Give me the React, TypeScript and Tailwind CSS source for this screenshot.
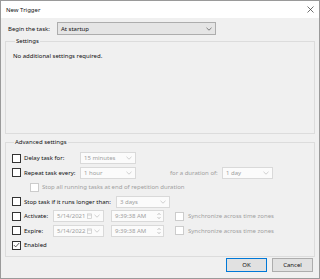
import React from 'react';

const font = { fontFamily: '"Noto Sans", "Open Sans", sans-serif' };

const Chevron = ({ disabled }: { disabled?: boolean }) => (
  <svg width="6" height="4" viewBox="0 0 6 4" className="shrink-0">
    <path d="M0.5 0.8 L3 3.2 L5.5 0.8" fill="none" stroke={disabled ? '#c4c4c4' : '#606060'} strokeWidth="0.8" />
  </svg>
);

const Check = ({ checked, disabled }: { checked?: boolean; disabled?: boolean }) => (
  <span
    className={`flex h-[9px] w-[9px] shrink-0 items-center justify-center border bg-white ${
      disabled ? 'border-[#cccccc]' : 'border-[#333333]'
    }`}
  >
    {checked && (
      <svg width="7" height="6" viewBox="0 0 7 6">
        <path d="M0.8 3 L2.7 4.9 L6.2 1" fill="none" stroke="#333" strokeWidth="0.8" />
      </svg>
    )}
  </span>
);

const Select = ({ value, width }: { value: string; width: string }) => (
  <div
    className={`flex h-[12px] ${width} shrink-0 items-center justify-between border border-[#d9d9d9] bg-[#fbfbfb] pl-[3px] pr-[3px] text-[#a0a0a0]`}
  >
    <span>{value}</span>
    <Chevron disabled />
  </div>
);

const DateBox = ({ value }: { value: string }) => (
  <div className="flex h-[12px] w-[51px] shrink-0 items-center justify-between border border-[#d9d9d9] bg-[#fbfbfb] pl-[3px] pr-[3px] text-[#a0a0a0]">
    <span>{value}</span>
    <span className="flex items-center gap-[2px]">
      <svg width="5" height="6" viewBox="0 0 5 6">
        <rect x="0.4" y="0.9" width="4.2" height="4.7" fill="none" stroke="#c8c8c8" strokeWidth="0.7" />
        <line x1="0.4" y1="2.1" x2="4.6" y2="2.1" stroke="#c8c8c8" strokeWidth="0.7" />
      </svg>
      <Chevron disabled />
    </span>
  </div>
);

const TimeBox = ({ value }: { value: string }) => (
  <div className="flex h-[12px] w-[53px] shrink-0 items-center justify-between border border-[#d9d9d9] bg-[#fbfbfb] pl-[3px] pr-[2px] text-[#a0a0a0]">
    <span>{value}</span>
    <svg width="4" height="8" viewBox="0 0 4 8">
      <path d="M0.5 3 L2 1.3 L3.5 3" fill="none" stroke="#b0b0b0" strokeWidth="0.7" />
      <path d="M0.5 5 L2 6.7 L3.5 5" fill="none" stroke="#b0b0b0" strokeWidth="0.7" />
    </svg>
  </div>
);

export default function App() {
  return (
    <div
      className="flex h-[279px] w-[320px] flex-col overflow-hidden whitespace-nowrap border border-[#9a9a9a] bg-[#f0f0f0] text-[6px] leading-none text-[#111111]"
      style={font}
    >
      <div className="flex h-[17px] shrink-0 items-center justify-between bg-white pl-[5px] pr-[5px]">
        <span>New Trigger</span>
        <svg width="7" height="7" viewBox="0 0 7 7">
          <path d="M0.5 0.5 L6.5 6.5 M6.5 0.5 L0.5 6.5" stroke="#333" strokeWidth="0.7" />
        </svg>
      </div>

      <div className="flex flex-1 flex-col px-[4px]">
        <div className="mt-[4px] flex items-center">
          <span className="ml-[3px] w-[49px]">Begin the task:</span>
          <div className="flex h-[13px] w-[159px] items-center justify-between border border-[#adadad] bg-[#e5e5e5] pl-[3px] pr-[3px]">
            <span>At startup</span>
            <Chevron />
          </div>
        </div>

        <fieldset className="mt-[3px] h-[96px] border border-[#dcdcdc] px-[7px]">
          <legend className="ml-[2px] px-[1px]">Settings</legend>
          <div className="mt-[9px]">No additional settings required.</div>
        </fieldset>

        <fieldset className="mt-[5px] h-[118px] border border-[#dcdcdc] px-[6px] pt-[7px]">
          <legend className="ml-[2px] px-[1px]">Advanced settings</legend>
          <div className="flex flex-col gap-[2.5px]">
            <div className="flex h-[12px] items-center">
              <Check />
              <span className="ml-[3px] w-[56px]">Delay task for:</span>
              <Select value="15 minutes" width="w-[56px]" />
            </div>
            <div className="flex h-[12px] items-center">
              <Check />
              <span className="ml-[3px] w-[56px]">Repeat task every:</span>
              <Select value="1 hour" width="w-[56px]" />
              <span className="ml-[34px] w-[52px] text-[#a0a0a0]">for a duration of:</span>
              <Select value="1 day" width="w-[51px]" />
            </div>
            <div className="flex h-[12px] items-center pl-[18px] text-[#a0a0a0]">
              <Check disabled />
              <span className="ml-[3px]">Stop all running tasks at end of repetition duration</span>
            </div>
            <div className="flex h-[12px] items-center">
              <Check />
              <span className="ml-[3px] w-[92px]">Stop task if it runs longer than:</span>
              <Select value="3 days" width="w-[54px]" />
            </div>
            <div className="flex h-[12px] items-center">
              <Check />
              <span className="ml-[3px] w-[29px]">Activate:</span>
              <DateBox value="5/14/2021" />
              <span className="ml-[7px]">
                <TimeBox value="9:39:38 AM" />
              </span>
              <span className="ml-[11px] flex items-center text-[#a0a0a0]">
                <Check disabled />
                <span className="ml-[4px]">Synchronize across time zones</span>
              </span>
            </div>
            <div className="flex h-[12px] items-center">
              <Check />
              <span className="ml-[3px] w-[29px]">Expire:</span>
              <DateBox value="5/14/2022" />
              <span className="ml-[7px]">
                <TimeBox value="9:39:38 AM" />
              </span>
              <span className="ml-[11px] flex items-center text-[#a0a0a0]">
                <Check disabled />
                <span className="ml-[4px]">Synchronize across time zones</span>
              </span>
            </div>
            <div className="flex h-[12px] items-center">
              <Check checked />
              <span className="ml-[3px]">Enabled</span>
            </div>
          </div>
        </fieldset>

        <div className="mt-[1px] flex justify-end gap-[5px] pr-[2px]">
          <button className="h-[14px] w-[41px] border border-[#0078d7] bg-[#e1e1e1]">OK</button>
          <button className="h-[14px] w-[41px] border border-[#adadad] bg-[#e1e1e1]">Cancel</button>
        </div>
      </div>
    </div>
  );
}
